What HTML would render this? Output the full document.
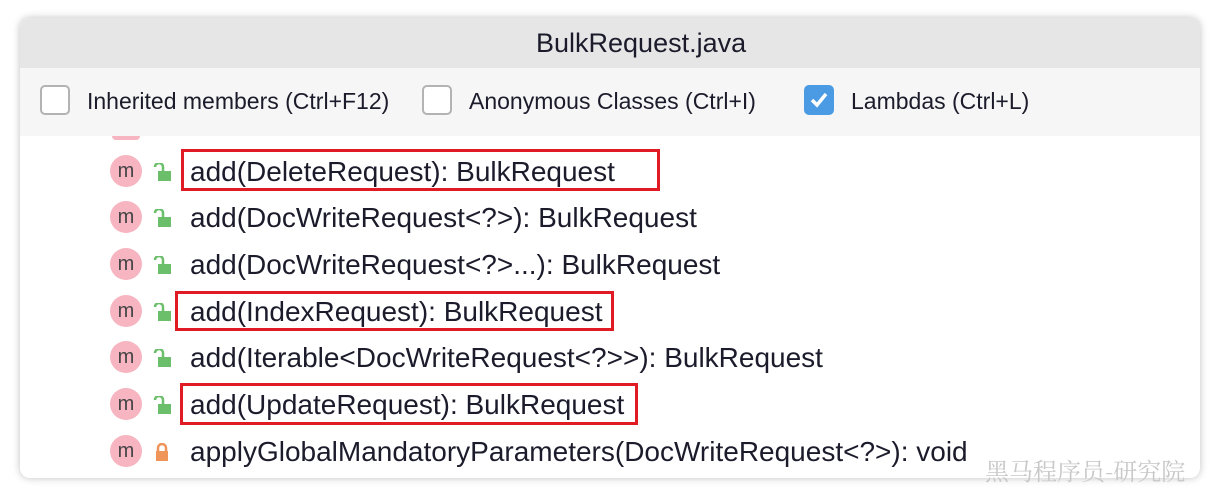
<!DOCTYPE html>
<html><head><meta charset="utf-8"><style>
body{margin:0;width:1212px;height:487px;background:#fff;position:relative;overflow:hidden;font-family:"Liberation Sans","Noto Sans CJK SC",sans-serif;color:#1b1b2b}
.win{position:absolute;left:20px;top:18px;width:1180px;height:460px;border-radius:10px;background:#fff;box-shadow:0 0 8px rgba(0,0,0,.25);overflow:hidden}
.title{position:absolute;left:516px;top:0;height:50px;background:#e6e6e6;line-height:50px;font-size:27px}
.tb{position:absolute;left:0;top:0;width:100%;height:50px;background:#e6e6e6}
.bar{position:absolute;left:0;top:50px;width:100%;height:68px;background:#f6f6f6}
.cb{position:absolute;top:17px;width:30px;height:30px;border:2px solid #b3b3b3;border-radius:5px;background:#fff;box-sizing:border-box}
.cb.on{background:#4a9be4;border-color:#4a9be4}
.lbl{position:absolute;top:19px;font-size:23px;line-height:28px}
.row{position:absolute;left:0;height:46px;width:100%}
.m{position:absolute;left:90px;top:7px;width:32px;height:32px;border-radius:50%;background:#f6b5c0;text-align:center;line-height:32px;font-size:20px;color:#444}
.t{position:absolute;left:170px;top:7px;font-size:28px;line-height:34px;white-space:nowrap}
.lk{position:absolute;left:132px;top:15px}
.red{position:absolute;border:3px solid #e01b24;box-sizing:border-box}
</style></head><body>
<div class="win">
<div class="tb"></div>
<div class="title">BulkRequest.java</div>
<div class="bar">
<div class="cb" style="left:20px"></div><div class="lbl" style="left:67px">Inherited members (Ctrl+F12)</div>
<div class="cb" style="left:402px"></div><div class="lbl" style="left:449px">Anonymous Classes (Ctrl+I)</div>
<div class="cb on" style="left:784px"><svg width="26" height="26" viewBox="0 0 26 26" style="position:absolute;left:0;top:0"><path d="M6 13l5 5 9-11" stroke="#fff" stroke-width="3.5" fill="none"/></svg></div><div class="lbl" style="left:831px">Lambdas (Ctrl+L)</div>
</div>
<div style="position:absolute;left:92px;top:118px;width:28px;height:4px;border-radius:0 0 14px 14px;background:#f6b5c0"></div>
</div>
<div style="position:absolute;left:20px;top:18px;width:1180px;height:460px">
<div class="row" style="top:130px"><div class="m">m</div><svg class="lk" width="20" height="18"><path d="M3 4a4 4 0 0 1 8 0v4" stroke="#6cbf6a" stroke-width="2.5" fill="none"/><rect x="6" y="8" width="13" height="10" fill="#6cbf6a"/></svg><div class="t">add(DeleteRequest): BulkRequest</div></div>
<div class="row" style="top:176px"><div class="m">m</div><svg class="lk" width="20" height="18"><path d="M3 4a4 4 0 0 1 8 0v4" stroke="#6cbf6a" stroke-width="2.5" fill="none"/><rect x="6" y="8" width="13" height="10" fill="#6cbf6a"/></svg><div class="t">add(DocWriteRequest&lt;?&gt;): BulkRequest</div></div>
<div class="row" style="top:223px"><div class="m">m</div><svg class="lk" width="20" height="18"><path d="M3 4a4 4 0 0 1 8 0v4" stroke="#6cbf6a" stroke-width="2.5" fill="none"/><rect x="6" y="8" width="13" height="10" fill="#6cbf6a"/></svg><div class="t">add(DocWriteRequest&lt;?&gt;...): BulkRequest</div></div>
<div class="row" style="top:270px"><div class="m">m</div><svg class="lk" width="20" height="18"><path d="M3 4a4 4 0 0 1 8 0v4" stroke="#6cbf6a" stroke-width="2.5" fill="none"/><rect x="6" y="8" width="13" height="10" fill="#6cbf6a"/></svg><div class="t">add(IndexRequest): BulkRequest</div></div>
<div class="row" style="top:316px"><div class="m">m</div><svg class="lk" width="20" height="18"><path d="M3 4a4 4 0 0 1 8 0v4" stroke="#6cbf6a" stroke-width="2.5" fill="none"/><rect x="6" y="8" width="13" height="10" fill="#6cbf6a"/></svg><div class="t">add(Iterable&lt;DocWriteRequest&lt;?&gt;&gt;): BulkRequest</div></div>
<div class="row" style="top:363px"><div class="m">m</div><svg class="lk" width="20" height="18"><path d="M3 4a4 4 0 0 1 8 0v4" stroke="#6cbf6a" stroke-width="2.5" fill="none"/><rect x="6" y="8" width="13" height="10" fill="#6cbf6a"/></svg><div class="t">add(UpdateRequest): BulkRequest</div></div>
<div class="row" style="top:410px"><div class="m">m</div><svg class="lk" width="20" height="18"><path d="M6 8V5a4 4 0 0 1 8 0v3" stroke="#f0955a" stroke-width="2.5" fill="none"/><rect x="4" y="8" width="12" height="10" fill="#f0955a"/></svg><div class="t">applyGlobalMandatoryParameters(DocWriteRequest&lt;?&gt;): void</div></div>
</div>
<div class="red" style="left:181px;top:149px;width:479px;height:42px"></div>
<div class="red" style="left:175px;top:291px;width:439px;height:40px"></div>
<div class="red" style="left:180px;top:383px;width:458px;height:42px"></div>
<div style="position:absolute;left:985px;top:452px;font-size:24px;color:#c8c8c8;font-family:'Noto Serif CJK SC',serif">黑马程序员-研究院</div>
</body></html>
